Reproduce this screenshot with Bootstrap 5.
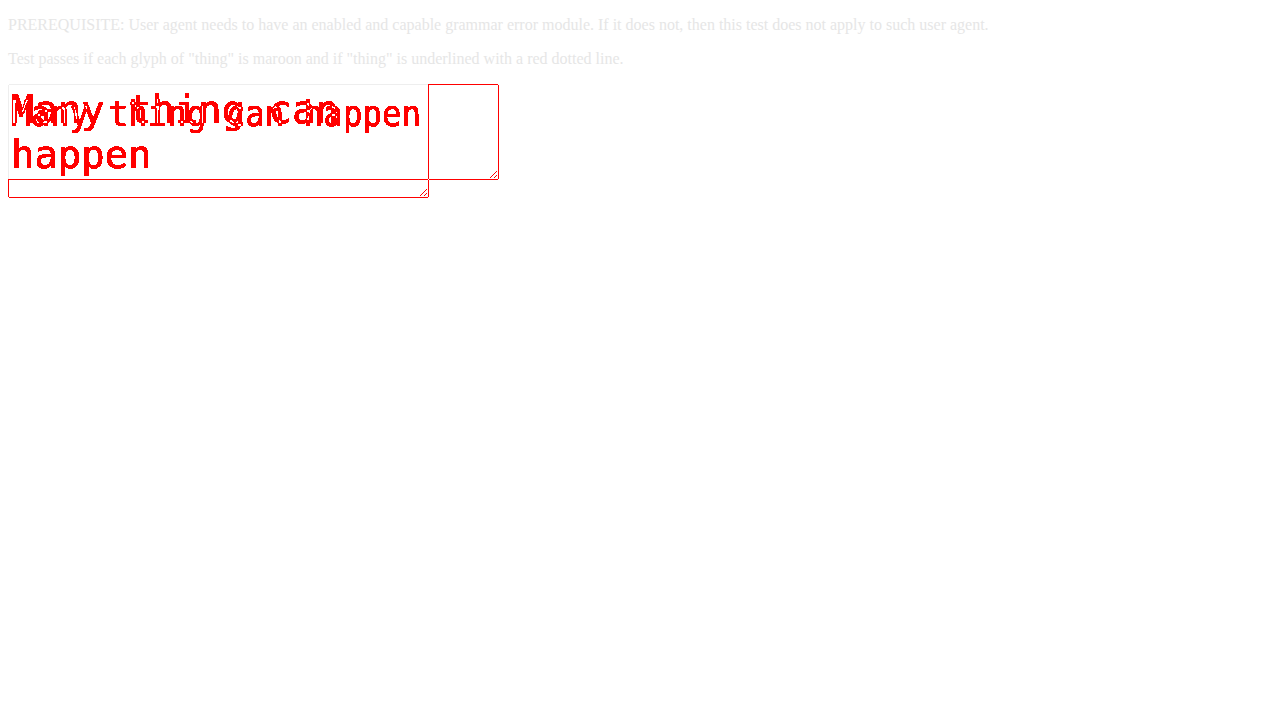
<!DOCTYPE html>
<html lang="en">
<head>
<meta charset="utf-8">
<title>Grammar error test</title>
<link href="https://cdn.jsdelivr.net/npm/bootstrap@5.3.0/dist/css/bootstrap.min.css" rel="stylesheet">
<style>
body{background:#fff;color:#e6e6e6;font:16px/18px "Liberation Serif",serif;padding:16px 8px}
.stage{width:491px;height:114px;background:#fff}
.stage text{font-family:"DejaVu Sans Mono",monospace;white-space:pre;fill:#0ff;mix-blend-mode:difference}
</style>
</head>
<body>
<main>
<p class="mb-3">PREREQUISITE: User agent needs to have an enabled and capable grammar error module. If it does not, then this test does not apply to such user agent.</p>
<p class="mb-3">Test passes if each glyph of "thing" is maroon and if "thing" is underlined with a red dotted line.</p>
<div class="stage">
<svg class="d-block" width="491" height="114" viewBox="0 0 491 114">
<filter id="solid" x="0" y="0" width="1" height="1" color-interpolation-filters="sRGB">
<feComponentTransfer><feFuncG type="discrete" tableValues="0 0 0 0 0 0 0 0 0 0 0 0 0 0 0 0 0 0 0 1"/><feFuncB type="discrete" tableValues="0 0 0 0 0 0 0 0 0 0 0 0 0 0 0 0 0 0 0 1"/></feComponentTransfer>
</filter>
<g filter="url(#solid)">
<rect width="491" height="114" fill="#fff"/>
<text x="3" y="38.5" font-size="38.9">Many thing can</text>
<text x="3" y="83.5" font-size="38.9">happen</text>
<text transform="translate(3.2 42) scale(.898 1)" font-size="36.1">Many thing can happen</text>
</g>
<g fill="none" shape-rendering="crispEdges">
<path stroke="#eee" d="M.5 95V1M1 .5H420"/>
<path stroke="#f00" d="M420 .5H490M490.5 1V95M0 95.5H490M.5 95V113M1 113.5H420M420.5 0V113"/>
<path stroke="#fff" d="M420 95.5h1"/>
<path stroke="#f00" d="M482 94l7-7M486 94l3-3M412 112l7-7M416 112l3-3"/>
</g>
</svg>
</div>
</main>
<script src="https://cdn.jsdelivr.net/npm/bootstrap@5.3.0/dist/js/bootstrap.bundle.min.js"></script>
</body>
</html>
